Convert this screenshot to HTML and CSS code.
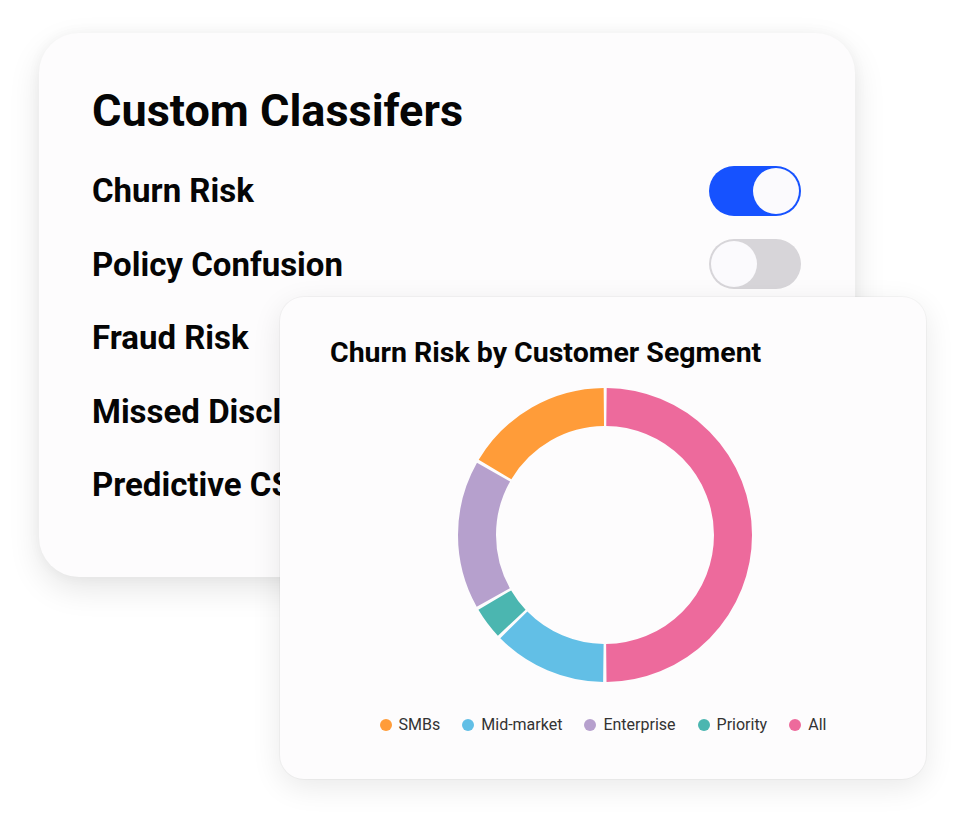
FILE: index.html
```html
<!DOCTYPE html>
<html lang="en">
<head>
    <meta charset="UTF-8">
    <meta name="viewport" content="width=device-width, initial-scale=1.0">
    <title>Custom Classifers</title>
    <link rel="stylesheet" href="styles.css">
</head>
<body>
    <div class="scene">
        <section class="card classifiers">
            <h1 class="classifiers-title">Custom Classifers</h1>
            <ul class="classifier-list">
                <li class="classifier"><span class="classifier-name">Churn Risk</span><span class="toggle on"></span></li>
                <li class="classifier"><span class="classifier-name">Policy Confusion</span><span class="toggle"></span></li>
                <li class="classifier"><span class="classifier-name">Fraud Risk</span><span class="toggle"></span></li>
                <li class="classifier"><span class="classifier-name">Missed Disclosures</span><span class="toggle"></span></li>
                <li class="classifier"><span class="classifier-name">Predictive CSAT</span><span class="toggle"></span></li>
            </ul>
        </section>

        <section class="card chart-card">
            <h2 class="chart-title">Churn Risk by Customer Segment</h2>
            <div class="donut">
                <!-- ring drawn with dashes on one circle, r=128, circumference 804.25 -->
                <svg width="294" height="294" viewBox="0 0 294 294">
                    <g transform="rotate(-90 147 147)" fill="none" stroke-width="38">
                        <circle cx="147" cy="147" r="128" stroke="#ed6a9c" stroke-dasharray="399.12 804.25" stroke-dashoffset="-1.5"/>
                        <circle cx="147" cy="147" r="128" stroke="#62bfe6" stroke-dasharray="99.77 804.25" stroke-dashoffset="-403.62"/>
                        <circle cx="147" cy="147" r="128" stroke="#4bb6b0" stroke-dasharray="28.28 804.25" stroke-dashoffset="-506.39"/>
                        <circle cx="147" cy="147" r="128" stroke="#b6a0cd" stroke-dasharray="131.04 804.25" stroke-dashoffset="-537.67"/>
                        <circle cx="147" cy="147" r="128" stroke="#ff9c39" stroke-dasharray="131.04 804.25" stroke-dashoffset="-671.71"/>
                    </g>
                </svg>
            </div>
            <ul class="legend">
                <li class="legend-item"><span class="dot smbs"></span>SMBs</li>
                <li class="legend-item"><span class="dot mid"></span>Mid-market</li>
                <li class="legend-item"><span class="dot enterprise"></span>Enterprise</li>
                <li class="legend-item"><span class="dot priority"></span>Priority</li>
                <li class="legend-item"><span class="dot all"></span>All</li>
            </ul>
        </section>
    </div>
</body>
</html>
```

FILE: styles.css
```css
body {
    margin: 0;
    background: #ffffff;
    font-family: Roboto, "Liberation Sans", Arial, sans-serif;
    color: #050505;
}
.scene {
    position: relative;
    width: 957px;
    height: 819px;
    padding: 33px 0 0 39px;
    box-sizing: border-box;
}
.card {
    background: #fdfcfd;
    box-sizing: border-box;
}
.classifiers {
    width: 816px;
    height: 544px;
    padding: 51px 54px 0 53px;
    border-radius: 40px;
    box-shadow: 0 12px 32px rgba(0, 0, 0, 0.10), 0 0 14px rgba(0, 0, 0, 0.04);
}
.classifiers-title {
    margin: 0;
    font-size: 45px;
    line-height: 53px;
    font-weight: 700;
}
.classifier-list {
    list-style: none;
    margin: 17px 0 0;
    padding: 0;
}
.classifier {
    display: flex;
    align-items: center;
    justify-content: space-between;
    height: 73.5px;
}
.classifier-name {
    font-size: 33px;
    font-weight: 700;
}
.toggle {
    position: relative;
    width: 92px;
    height: 50px;
    border-radius: 25px;
    background: #d7d5d9;
}
.toggle::after {
    content: "";
    position: absolute;
    top: 2px;
    left: 2px;
    width: 46px;
    height: 46px;
    border-radius: 50%;
    background: #fbfafd;
}
.toggle.on {
    background: #1652ff;
}
.toggle.on::after {
    left: 44px;
}
.chart-card {
    position: absolute;
    left: 280px;
    top: 297px;
    width: 646px;
    height: 482px;
    padding: 39px 50px 0;
    border-radius: 24px;
    box-shadow: 0 8px 30px rgba(0, 0, 0, 0.09), 0 0 0 1px rgba(0, 0, 0, 0.03);
}
.chart-title {
    margin: 0;
    font-size: 28.5px;
    line-height: 33px;
    font-weight: 700;
}
.donut {
    display: flex;
    justify-content: center;
    margin: 19px 0 0 4px;
    height: 294px;
}
.legend {
    list-style: none;
    display: flex;
    justify-content: center;
    gap: 22px;
    margin: 33px 0 0;
    padding: 0;
    font-size: 16px;
    line-height: 19px;
    color: #333333;
}
.legend-item {
    display: flex;
    align-items: center;
    gap: 7px;
}
.dot {
    width: 12px;
    height: 12px;
    border-radius: 50%;
}
.dot.smbs { background: #ff9c39; }
.dot.mid { background: #62bfe6; }
.dot.enterprise { background: #b6a0cd; }
.dot.priority { background: #4bb6b0; }
.dot.all { background: #ed6a9c; }
```
